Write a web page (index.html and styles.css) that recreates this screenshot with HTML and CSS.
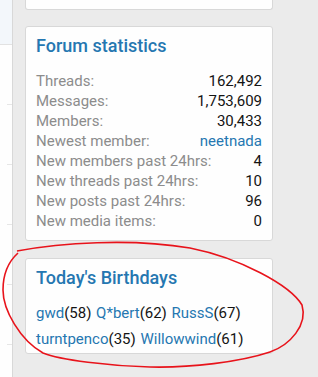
FILE: index.html
```html
<!DOCTYPE html>
<html>

<head>
  <title>Forum statistics</title>
  <link rel="stylesheet" href="styles.css">
</head>

<body>

  <div class="page">
    <aside class="side">
      <div class="side-top"></div>
      <div class="side-row"></div>
      <div class="side-row"></div>
      <div class="side-row"></div>
      <div class="side-row"></div>
      <div class="side-row"></div>
      <div class="side-row"></div>
    </aside>

    <main class="sidebar">
      <div class="block block-cut"></div>

      <div class="block stats">
        <h3 class="block-title">Forum statistics</h3>
        <dl class="pairs">
          <div class="pair"><dt>Threads:</dt><dd>162,492</dd></div>
          <div class="pair"><dt>Messages:</dt><dd>1,753,609</dd></div>
          <div class="pair"><dt>Members:</dt><dd>30,433</dd></div>
          <div class="pair"><dt>Newest member:</dt><dd><a href="#">neetnada</a></dd></div>
          <div class="pair"><dt>New members past 24hrs:</dt><dd>4</dd></div>
          <div class="pair"><dt>New threads past 24hrs:</dt><dd>10</dd></div>
          <div class="pair"><dt>New posts past 24hrs:</dt><dd>96</dd></div>
          <div class="pair"><dt>New media items:</dt><dd>0</dd></div>
        </dl>
      </div>

      <div class="block birthdays">
        <h3 class="block-title">Today's Birthdays</h3>
        <ul class="bday-list">
          <li><a href="#">gwd</a>(58)</li>
          <li><a href="#">Q*bert</a>(62)</li>
          <li><a href="#">RussS</a>(67)</li>
          <li><a href="#">turntpenco</a>(35)</li>
          <li><a href="#">Willowwind</a>(61)</li>
        </ul>
        <svg class="scribble" viewBox="0 0 318 377" width="318" height="377">
          <path d="M17 251 C 60 243, 130 238, 190 248 C 240 258, 290 285, 302 305 C 308 325, 290 345, 270 352 C 240 362, 190 368, 150 367 C 110 366, 60 360, 43 353 C 20 340, 3 310, 3 290 C 3 275, 8 262, 18 253" fill="none" stroke="#e8131b" stroke-width="1.6"/>
        </svg>
      </div>
    </main>
  </div>

</body>

</html>
```

FILE: styles.css
```css
body {
  margin: 0;
  padding: 0;
  background: #ebebeb;
  font-family: Roboto, 'Noto Sans', sans-serif;
  font-size: 15px;
  color: #141414;
  overflow: hidden;
}

a {
  color: #2577b1;
  text-decoration: none;
}

.page {
  display: flex;
  height: 377px;
  overflow: hidden;
}

.side {
  width: 12px;
  flex-shrink: 0;
  background: #fefefe;
  border-right: 1px solid #d8d8d8;
  overflow: hidden;
}

.side-top {
  height: 44px;
  background: #f3f7fb;
  border-bottom: 1px solid #e2e2e2;
}

.side-row {
  height: 59px;
  border-bottom: 1px solid #e6e6e6;
  margin-left: 7px;
}

.sidebar {
  width: 248px;
  padding: 0 0 0 12px;
}

.block {
  background: #fefefe;
  border: 1px solid #d8d8d8;
  border-radius: 3px;
  padding: 6px 10px 7px;
  margin-bottom: 16px;
}

.block-cut {
  height: 9px;
  padding: 0;
  border-top: none;
  border-radius: 0 0 3px 3px;
}

.stats {
  padding-bottom: 9px;
  margin-bottom: 17px;
}

.block-title {
  margin: 0 0 12px;
  font-size: 18px;
  font-weight: 500;
  color: #2577b1;
  line-height: 26px;
}

.pairs {
  margin: 0;
  line-height: 20px;
}

.pair {
  display: flex;
  justify-content: space-between;
}

.pair dt {
  color: #8c8c8c;
}

.pair dd {
  margin: 0;
}

.birthdays {
  position: relative;
  padding-bottom: 1px;
}

.birthdays .block-title {
  margin-bottom: 9px;
}

.bday-list {
  list-style: none;
  margin: 0;
  padding: 0;
  line-height: 26px;
}

.bday-list li {
  display: inline;
  margin-right: 1px;
}

.scribble {
  position: absolute;
  left: -26px;
  top: -259px;
  pointer-events: none;
}
```
